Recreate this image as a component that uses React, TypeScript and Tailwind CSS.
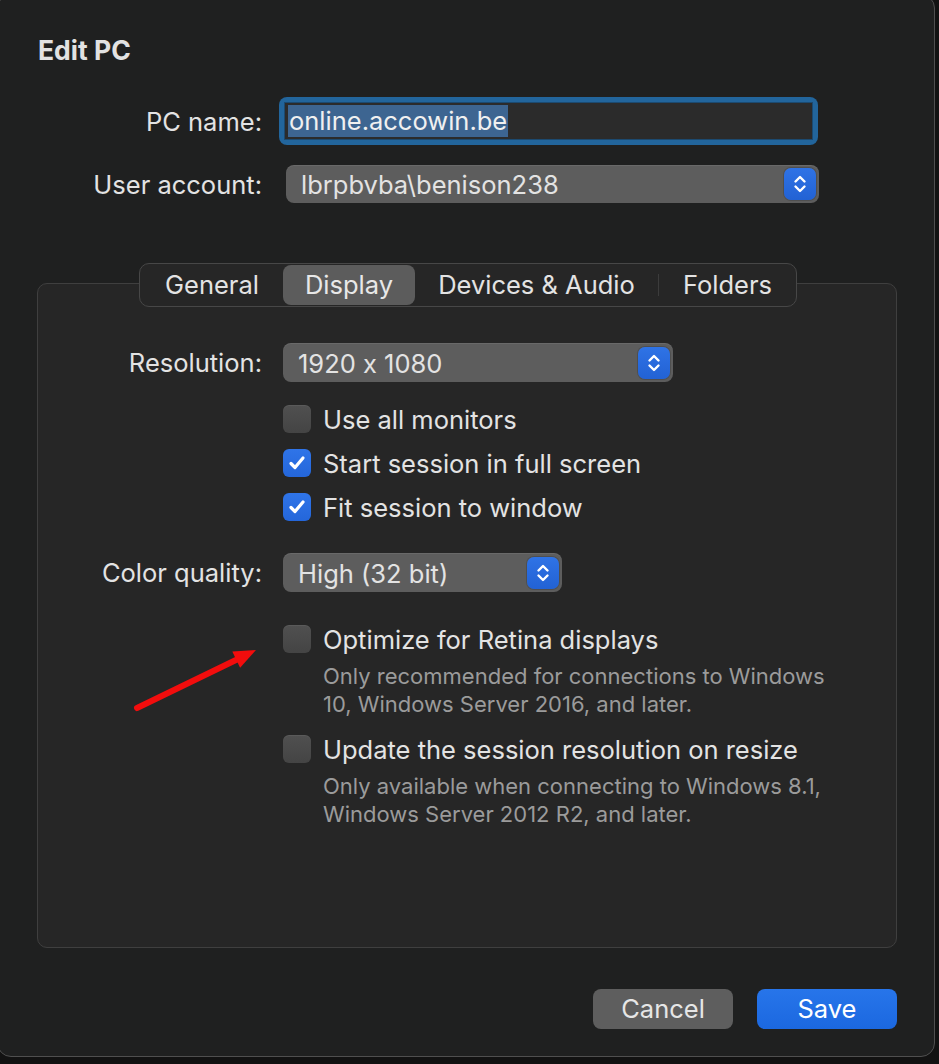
import React from "react";

const Stepper = () => (
	<div className="w-[32px] h-[32px] rounded-[7px] bg-gradient-to-b from-[#2f73e6] to-[#2262d4] flex items-center justify-center shadow-[0_0_0_1px_rgba(0,0,0,0.15)]">
		<svg width="16" height="22" viewBox="0 0 16 22" fill="none" stroke="white" strokeWidth="2.4" strokeLinecap="round" strokeLinejoin="round">
			<path d="M3.5 8.5 L8 4 L12.5 8.5" />
			<path d="M3.5 13.5 L8 18 L12.5 13.5" />
		</svg>
	</div>
);

const Popup = ({ value, width, height = 38 }: { value: string; width: number; height?: number }) => (
	<div
		className="flex items-center justify-between rounded-[8px] bg-[#5d5d5d] pl-[15px] pr-[3px] shadow-[inset_0_1px_0_rgba(255,255,255,0.08)]"
		style={{ width, height }}
	>
		<span className="text-[25.5px] leading-[32px] pt-[2px] text-[#e3e3e3]">{value}</span>
		<Stepper />
	</div>
);

const Checkbox = ({ checked }: { checked?: boolean }) =>
	checked ? (
		<div className="w-[28px] h-[28px] rounded-[6px] bg-gradient-to-b from-[#2f74e8] to-[#2466da] flex items-center justify-center">
			<svg width="20" height="20" viewBox="0 0 20 20" fill="none" stroke="white" strokeWidth="3.2" strokeLinecap="round" strokeLinejoin="round">
				<path d="M4 10.5 L8 14.5 L16 5" />
			</svg>
		</div>
	) : (
		<div className="w-[28px] h-[28px] rounded-[6px] bg-gradient-to-b from-[#505050] to-[#444444] shadow-[inset_0_1px_0_rgba(255,255,255,0.06)]" />
	);

const CheckRow = ({ label, checked }: { label: string; checked?: boolean }) => (
	<div className="flex items-center h-[44px] ml-[245px]">
		<Checkbox checked={checked} />
		<span className="ml-[12px] text-[25.5px] leading-[32px] pt-[2px] text-[#e3e3e3]">{label}</span>
	</div>
);

const tabs = ["General", "Display", "Devices & Audio", "Folders"];

export default function App() {
	return (
		<div className="relative w-[939px] h-[1064px] overflow-hidden bg-[#121212] font-['Inter',sans-serif] [font-feature-settings:'calt'_0] antialiased">
			<div className="ml-[-3px] mt-[-6px] w-[938px] h-[1063px] rounded-[14px] border border-[#4f4f4f] bg-[#1f2020]">
				<div className="pt-[39px] pl-[40px] h-[71px] text-[26.5px] font-bold leading-[32px] text-[#e2e2e2]">Edit PC</div>

				{/* PC name */}
				<div className="flex items-center mt-[31px] h-[48px]">
					<div className="w-[264px] text-right text-[25.5px] pt-[2px] text-[#e3e3e3]">PC name:</div>
					<div className="ml-[17px] w-[539px] h-[48px] rounded-[8px] bg-[#22659c] p-[5px]">
						<div className="h-full bg-[#2b2b2b] border border-[#1c4a70] flex items-center pl-[3px]">
							<span className="bg-[#3d6591] text-[25.5px] leading-[32px] text-[#f0f0f0] px-[1px]">online.accowin.be</span>
						</div>
					</div>
				</div>

				{/* User account */}
				<div className="flex items-center mt-[20px] h-[38px]">
					<div className="w-[264px] text-right text-[25.5px] pt-[2px] text-[#e3e3e3]">User account:</div>
					<div className="ml-[24px]">
						<Popup value="lbrpbvba\benison238" width={533} />
					</div>
				</div>

				{/* Tabs */}
				<div className="mt-[60px] ml-[141px] relative z-10 flex w-[658px] h-[44px] rounded-[10px] border border-[#474747] bg-[#262626] items-center px-[1px]">
					{tabs.map((t, i) => (
						<div key={t} className="flex items-center h-full">
							{i === 3 && <div className="w-[1px] h-[22px] bg-[#3c3c3c]" />}
							<div
								className={
									t === "Display"
										? "h-[40px] w-[132px] rounded-[8px] bg-[#5c5c5c] flex items-center justify-center text-[25.5px] text-[#e8e8e8]"
										: i === 0
										? "h-[40px] w-[142px] flex items-center justify-center text-[25.5px] text-[#e3e3e3]"
										: i === 2
										? "h-[40px] w-[243px] flex items-center justify-center text-[25.5px] text-[#e3e3e3]"
										: "h-[40px] w-[137px] flex items-center justify-center text-[25.5px] text-[#e3e3e3]"
								}
							>
								{t}
							</div>
						</div>
					))}
				</div>

				<div className="-mt-[24px] ml-[39px] w-[860px] h-[665px] rounded-[10px] border border-[#3f3f3f] bg-[#262626]">
					<div className="flex items-center mt-[59px] h-[39px]">
						<div className="w-[224px] text-right text-[25.5px] pt-[2px] text-[#e3e3e3]">Resolution:</div>
						<div className="ml-[21px]">
							<Popup value="1920 x 1080" width={390} height={39} />
						</div>
					</div>

					<div className="mt-[15px]">
						<CheckRow label="Use all monitors" />
						<CheckRow label="Start session in full screen" checked />
						<CheckRow label="Fit session to window" checked />
					</div>

					<div className="flex items-center mt-[24px] h-[39px]">
						<div className="w-[224px] text-right text-[25.5px] pt-[2px] text-[#e3e3e3]">Color quality:</div>
						<div className="ml-[21px]">
							<Popup value="High (32 bit)" width={279} height={39} />
						</div>
					</div>

					<div className="mt-[25px]">
						<CheckRow label="Optimize for Retina displays" />
						<div className="ml-[285px] text-[22px] leading-[28px] pt-[1px] text-[#9b9b9b]">
							<div>Only recommended for connections to Windows</div>
							<div>10, Windows Server 2016, and later.</div>
						</div>
					</div>

					<div className="mt-[9px]">
						<CheckRow label="Update the session resolution on resize" />
						<div className="ml-[285px] text-[22px] leading-[28px] pt-[1px] text-[#9b9b9b]">
							<div>Only available when connecting to Windows 8.1,</div>
							<div>Windows Server 2012 R2, and later.</div>
						</div>
					</div>
				</div>

				<div className="mt-[41px] ml-[39px] w-[860px] flex justify-end gap-[24px]">
					<button className="w-[140px] h-[40px] rounded-[8px] bg-[#5e5e5e] text-[25.5px] text-[#e6e6e6]">Cancel</button>
					<button className="w-[140px] h-[40px] rounded-[8px] bg-gradient-to-b from-[#2775ea] to-[#1b68e0] text-[25.5px] text-white">Save</button>
				</div>
			</div>

			{/* annotation arrow */}
			<svg className="absolute left-[130px] top-[640px]" width="135" height="80" viewBox="0 0 135 80">
				<line x1="7" y1="68" x2="108" y2="19" stroke="#f20d0d" strokeWidth="6" strokeLinecap="round" />
				<polygon points="126,10 110.1,27.7 102.3,11.5" fill="#f20d0d" />
			</svg>
		</div>
	);
}
